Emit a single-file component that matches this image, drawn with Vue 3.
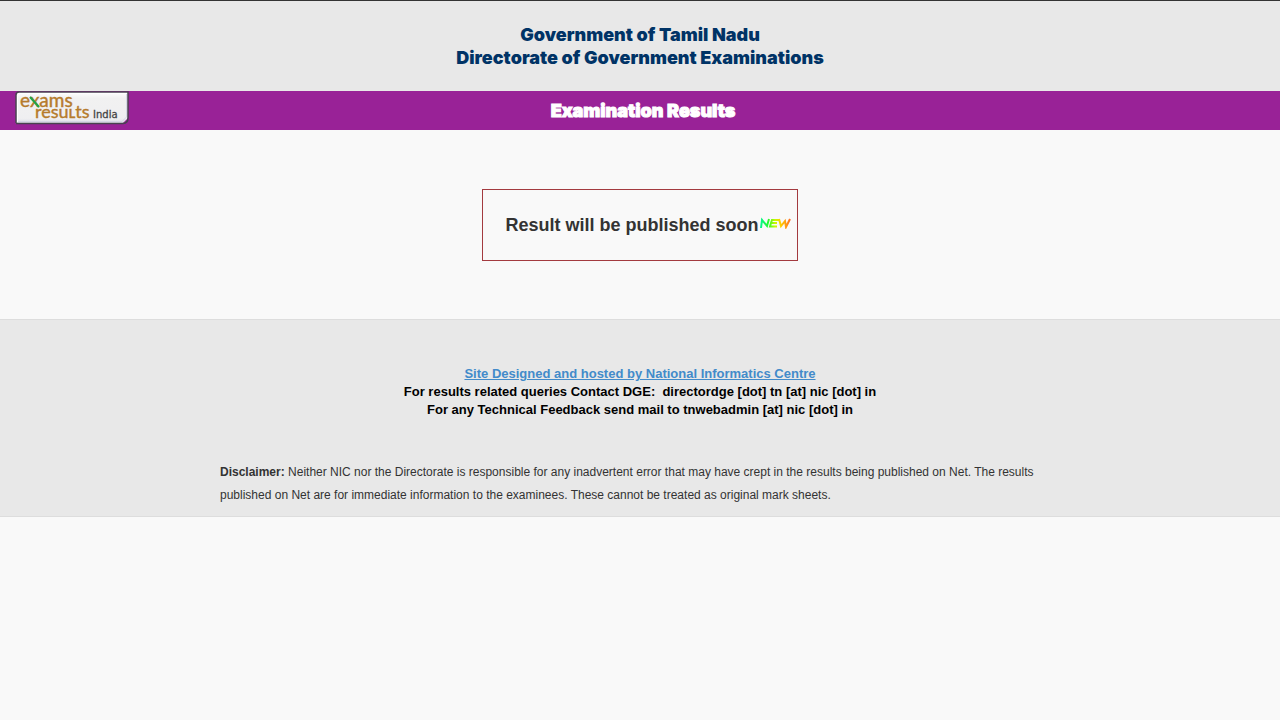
<script setup>
const contactLines = [
  'For results related queries Contact DGE:\u00a0 directordge [dot] tn [at] nic [dot] in',
  'For any Technical Feedback send mail to tnwebadmin [at] nic [dot] in',
]
</script>

<template>
  <div class="page">
    <header class="masthead">
      <h1>Government of Tamil Nadu<br />Directorate of Government Examinations</h1>
    </header>

    <div class="banner">
      <a class="logo" href="#" aria-label="Exams Results India">
        <svg width="114" height="34" viewBox="0 0 114 34">
          <defs>
            <linearGradient id="plate" x1="0" y1="0" x2="0" y2="1">
              <stop offset="0" stop-color="#ffffff" />
              <stop offset="0.2" stop-color="#f1f1f1" />
              <stop offset="0.85" stop-color="#efeff1" />
              <stop offset="1" stop-color="#dddfe9" />
            </linearGradient>
          </defs>
          <path d="M4 1H113V27L108 32H1V4Q1 1 4 1Z" fill="url(#plate)" />
          <path d="M3 30.500H107L111.500 26V3" fill="none" stroke="#d5d7e6" />
          <path d="M2.500 31V5L5 2.500H111" fill="none" stroke="#ffffff" />
          <path d="M1 32V4Q1 1 4 1H113V27Q113 32 108 32.500H1" fill="none" stroke="#494351" stroke-width="1.500" />
          <text class="logo-word logo-exams" x="5" y="16">exams</text>
          <text class="logo-word" x="20" y="27">resuʟts</text>
          <path d="M15 6L24 16" stroke="#20a548" stroke-width="2" />
          <text class="logo-india" x="78" y="27">India</text>
        </svg>
      </a>
      <h2>Examination Results</h2>
    </div>

    <main>
      <div class="notice">
        <p>Result will be published soon</p>
        <svg class="new" width="32" height="12" viewBox="0 0 32 12" role="img" aria-label="New">
          <defs>
            <linearGradient id="rainbow" gradientUnits="userSpaceOnUse" x1="0" y1="0" x2="32" y2="0">
              <stop offset="0" stop-color="#00f5a0" />
              <stop offset="0.28" stop-color="#20fa30" />
              <stop offset="0.5" stop-color="#c4fa00" />
              <stop offset="0.68" stop-color="#ffcf00" />
              <stop offset="1" stop-color="#ff6528" />
            </linearGradient>
          </defs>
          <g fill="none" stroke="url(#rainbow)" stroke-width="2">
            <path d="M2 11L3 3L8 9L10 2" />
            <path d="M20 3L13 3L12 6L11 9.500L18 9.500M12 6L18 6" />
            <path d="M20 2L22 9L26 4L27 10L31 2" />
          </g>
        </svg>
      </div>
    </main>

    <footer>
      <address>
        <a href="#">Site Designed and hosted by National Informatics Centre</a>
        <p v-for="line in contactLines" :key="line">{{ line }}</p>
      </address>
      <p class="disclaimer">
        <strong>Disclaimer:</strong> Neither NIC nor the Directorate is responsible for any
        inadvertent error that may have crept in the results being published on Net. The results
        published on Net are for immediate information to the examinees. These cannot be treated as
        original mark sheets.
      </p>
    </footer>
  </div>
</template>

<style>
body {
  background: #f9f9f9;
}
</style>

<style scoped>
.page {
  font-family: "Liberation Sans", Arial, sans-serif;
  color: #333;
}
h1,
h2,
p {
  margin: 0;
}
.masthead {
  border-top: 1px solid #333;
  background: #e8e8e8;
  padding: 22px 16px;
  text-align: center;
}
h1,
h2 {
  font-family: "Arial Black", Inter, "Liberation Sans", sans-serif;
  font-weight: 900;
  font-size: 18px;
  line-height: 23px;
}
h1 {
  color: #036;
}
.banner {
  display: grid;
  grid-template-columns: 1fr auto 1fr;
  align-items: start;
  padding: 0 9px 0 15px;
  background: #992297;
}
.logo {
  display: block;
  width: 114px;
}
.logo svg {
  display: block;
  overflow: visible;
}
.logo-word {
  font-family: Lato, sans-serif;
  font-size: 18px;
  fill: #b67b2c;
  stroke: #b67b2c;
  stroke-width: 0.4px;
}
.logo-exams {
  font-size: 19px;
}
.logo-india {
  font-family: "DejaVu Sans", sans-serif;
  font-size: 10px;
  fill: #444;
  stroke: #444;
  stroke-width: 0.3px;
}
h2 {
  color: #fff;
  line-height: 39px;
  -webkit-text-stroke: 1px #fff;
}
main {
  display: flex;
  justify-content: center;
  padding: 59px 16px 58px;
}
.notice {
  display: flex;
  align-items: center;
  padding: 23px 6px 23px 22px;
  border: 1px solid #a33a3f;
}
.notice p {
  font-size: 18px;
  line-height: 24px;
  font-weight: 700;
}
.new {
  margin-bottom: 4px;
}
footer {
  border-top: 1px solid #ddd;
  border-bottom: 1px solid #ddd;
  background: #e8e8e8;
  padding: 45px 16px 9px;
}
address {
  font-style: normal;
  font-weight: 700;
  font-size: 13px;
  line-height: 18px;
  text-align: center;
  color: #000;
}
address a {
  color: #428bca;
}
.disclaimer {
  max-width: 840px;
  margin: 42px auto 0;
  font-size: 12px;
  line-height: 23px;
}
</style>
